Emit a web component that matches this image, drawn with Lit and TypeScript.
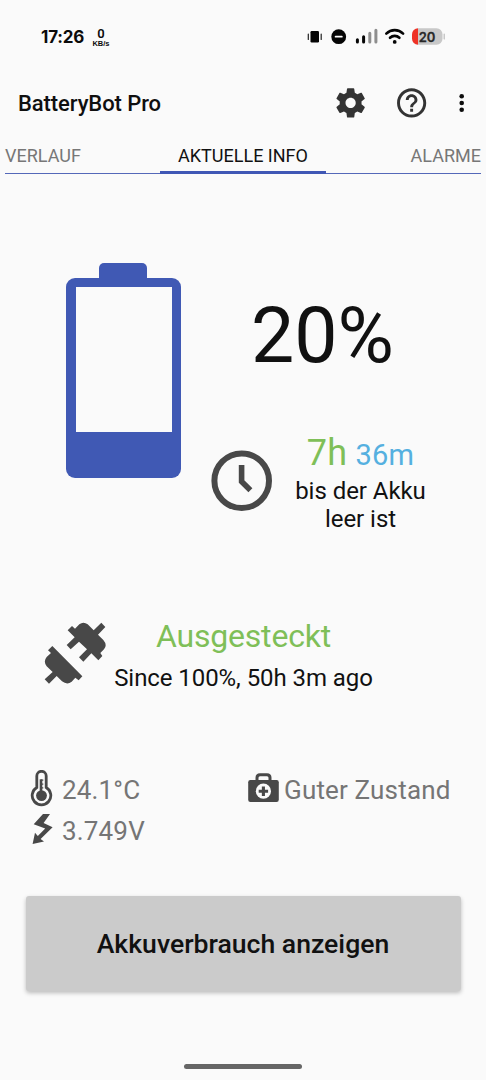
import { LitElement, html, css } from "lit";
import { customElement, property } from "lit/decorators.js";

@customElement("status-bar")
class StatusBar extends LitElement {
  static styles = css`
    :host { display: flex; height: 74px; box-sizing: border-box; padding: 0 41px 0 41px; align-items: flex-start; font-family: Inter, sans-serif; color: #0b0b0b; }
    .time { font-size: 17px; font-weight: 700; line-height: 20px; margin-top: 27px; width: 51px; letter-spacing: -0.2px; white-space: nowrap; }
    .net { display: flex; flex-direction: column; align-items: center; margin-top: 28px; width: 18px; font-weight: 700; }
    .rate { font: 600 13px/12px Roboto, sans-serif; }
    .unit { font: 700 7.5px/7px "Liberation Sans", sans-serif; }
    .icons { margin: 26px 0 0 auto; display: block; }
    .level { font: 600 13px Inter, sans-serif; letter-spacing: 0; }
  `;
  render() {
    return html`
      <div class="time">17:26</div>
      <div class="net"><span class="rate">0</span><span class="unit">KB/s</span></div>
      <svg class="icons" width="140" height="22" viewBox="305 26 140 22">
        <rect x="310.5" y="31" width="8.5" height="11.5" rx="1.2" fill="#050505" />
        <path d="M308.3 34v5.5M321.2 34v5.5" stroke="#222" stroke-width="1.2" stroke-linecap="round" />
        <circle cx="338.7" cy="36.7" r="7.4" fill="#050505" />
        <path d="M335.6 36.7h6.2" stroke="#fff" stroke-width="1.8" stroke-linecap="round" />
        <g stroke-width="3" stroke-linecap="round">
          <path d="M357.4 39.7v2.2M363.6 36.8v5.1" stroke="#050505" />
          <path d="M369.8 33.2v8.7M375.9 30.2v11.7" stroke="#8e8e8e" />
        </g>
        <g fill="none" stroke="#050505" stroke-width="2.6" stroke-linecap="round">
          <path d="M386.3 33.6a12 12 0 0 1 16.8 0M390 37.8a6.8 6.8 0 0 1 9.4 0" />
        </g>
        <circle cx="394.7" cy="41.9" r="1.9" fill="#050505" />
        <path d="M418 28.3h18.5a6 6 0 0 1 6 6v4.4a6 6 0 0 1-6 6H418z" fill="#c8c8c8" />
        <path d="M418 28.3a6 6 0 0 0-6 6v4.4a6 6 0 0 0 6 6z" fill="#ee3226" />
        <path d="M444.3 34.4v4.4" stroke="#c8c8c8" stroke-width="1.6" stroke-linecap="round" />
        <text class="level" x="427" y="41.5" text-anchor="middle" fill="#292929" stroke="#292929" stroke-width=".3">20</text>
      </svg>
    `;
  }
}

@customElement("app-bar")
class AppBar extends LitElement {
  static styles = css`
    :host { display: flex; height: 58px; align-items: center; padding: 0 18px 0 18px; }
    h1 { flex: 1; margin: 0; padding-top: 2px; font: 500 22px/30px Roboto, sans-serif; color: #0f0f0f; letter-spacing: -0.08px; }
    svg { display: block; }
    .gear { margin-right: 26px; }
    .help { margin-right: 25px; }
  `;
  render() {
    return html`
      <h1>BatteryBot Pro</h1>
      <svg class="gear" width="35" height="35" viewBox="0.6 0.4 24 24">
        <path fill="#333" d="M19.43 12.98c.04-.32.07-.64.07-.98s-.03-.66-.07-.98l2.11-1.65c.19-.15.24-.42.12-.64l-2-3.46c-.12-.22-.39-.3-.61-.22l-2.49 1c-.52-.4-1.08-.73-1.69-.98l-.38-2.65A.488.488 0 0 0 14 2h-4c-.25 0-.46.18-.49.42l-.38 2.65c-.61.25-1.17.59-1.69.98l-2.49-1c-.23-.09-.49 0-.61.22l-2 3.46c-.13.22-.07.49.12.64l2.11 1.65c-.04.32-.07.65-.07.98s.03.66.07.98l-2.11 1.65c-.19.15-.24.42-.12.64l2 3.46c.12.22.39.3.61.22l2.49-1c.52.4 1.08.73 1.69.98l.38 2.65c.03.24.24.42.49.42h4c.25 0 .46-.18.49-.42l.38-2.65c.61-.25 1.17-.59 1.69-.98l2.49 1c.23.09.49 0 .61-.22l2-3.46c.12-.22.07-.49-.12-.64l-2.11-1.65zM12 15.5c-1.93 0-3.5-1.57-3.5-3.5s1.57-3.5 3.5-3.5 3.5 1.57 3.5 3.5-1.57 3.5-3.5 3.5z" />
      </svg>
      <svg class="help" width="35" height="35" viewBox="0.6 0.4 24 24">
        <path fill="#333" d="M11 18h2v-2h-2v2zm1-16C6.48 2 2 6.48 2 12s4.48 10 10 10 10-4.48 10-10S17.52 2 12 2zm0 18c-4.41 0-8-3.59-8-8s3.59-8 8-8 8 3.59 8 8-3.59 8-8 8zm0-14c-2.21 0-4 1.79-4 4h2c0-1.1.9-2 2-2s2 .9 2 2c0 2-3 1.75-3 5h2c0-2.25 3-2.5 3-5 0-2.21-1.79-4-4-4z" />
      </svg>
      <svg width="13" height="24" viewBox="0 0 13 24">
        <g fill="#0d0d0d"><circle cx="6.7" cy="5.2" r="2.3" /><circle cx="6.7" cy="12" r="2.3" /><circle cx="6.7" cy="18.8" r="2.3" /></g>
      </svg>
    `;
  }
}

@customElement("tab-strip")
class TabStrip extends LitElement {
  static styles = css`
    :host { display: grid; grid-template-columns: 155px 166px 155px; margin: 0 5px; height: 42px; box-sizing: border-box; font: 400 18px/24px Roboto, sans-serif; color: #777; }
    .tab { border-bottom: 1px solid #5468b9; padding-top: 12px; white-space: nowrap; }
    .active { color: #111; text-align: center; border-bottom: 3px solid #3f57b5; }
    .last { text-align: right; }
  `;
  render() {
    return html`
      <div class="tab">VERLAUF</div>
      <div class="tab active">AKTUELLE INFO</div>
      <div class="tab last">ALARME</div>
    `;
  }
}

@customElement("battery-gauge")
class BatteryGauge extends LitElement {
  @property({ type: Number }) level = 20;
  static styles = css`
    :host { display: flex; flex-direction: column; width: 115px; }
    .cap { width: 48px; height: 15px; margin-left: 33.3px; border-radius: 5px 5px 0 0; background: #4059b4; }
    .body { width: 115px; height: 200px; box-sizing: border-box; border-radius: 9px; padding: 9px 9.5px; background: #4059b4; }
    .cell { height: 181px; display: flex; flex-direction: column; }
    .empty { background: #fafafa; }
  `;
  render() {
    return html`
      <div class="cap"></div>
      <div class="body"><div class="cell"><div class="empty" style="height:${100 - this.level}%"></div></div></div>
    `;
  }
}

@customElement("app-root")
class AppRoot extends LitElement {
  static styles = css`
    :host { display: flex; flex-direction: column; height: 1080px; background: #fafafa; font-family: Roboto, sans-serif; color: #111; overflow: hidden; }
    svg { display: block; flex: none; }
    .main { display: flex; height: 354px; padding: 89px 0 0 66px; box-sizing: border-box; }
    .side { flex: 1; display: flex; flex-direction: column; padding-left: 30px; }
    .percent { font-size: 77px; line-height: 90px; margin: 28px 0 0 40px; white-space: nowrap; }
    .remaining { display: flex; margin-top: 50px; }
    .clock { margin-top: 19px; }
    .estimate { width: 175px; text-align: center; }
    .time { line-height: 44px; height: 46px; letter-spacing: 0.2px; }
    .hours { font-size: 36px; color: #7fbf58; }
    .minutes { font-size: 29px; color: #55b0e0; margin-left: 4px; }
    .caption { font-size: 24px; line-height: 28px; letter-spacing: -0.05px; }
    .plugged { display: flex; height: 240px; box-sizing: border-box; padding: 88px 0 0 43px; }
    .plug { margin-top: 5px; }
    .state { width: 273px; text-align: center; white-space: nowrap; }
    .name { font-size: 32px; line-height: 40px; color: #7fbf58; letter-spacing: -0.2px; }
    .since { font-size: 24px; line-height: 30px; margin-top: 7px; letter-spacing: -0.07px; }
    .vitals { display: grid; grid-template-columns: 218px 1fr; grid-template-rows: 41px 41px; padding-left: 30px; height: 128px; box-sizing: border-box; font-size: 26px; line-height: 41px; color: #757575; letter-spacing: 0.17px; }
    .vital { display: flex; align-items: center; white-space: nowrap; }
    .vital svg { margin-right: 8px; }
    .vital .kit { margin-right: 4px; }
    .vital span { padding-top: 3px; line-height: 38px; }
    .usage { margin: 0 25.5px; height: 95px; flex: none; border: 0; border-radius: 3px; background: #cbcbcb; box-shadow: 0 2px 4px rgba(0,0,0,.25); font: 500 26.6px/30px Roboto, sans-serif; color: #111; }
    .handle { margin: 73px auto 0; width: 118px; height: 5px; border-radius: 3px; background: #666; }
  `;
  render() {
    return html`
      <status-bar></status-bar>
      <app-bar></app-bar>
      <tab-strip></tab-strip>
      <section class="main">
        <battery-gauge .level=${20}></battery-gauge>
        <div class="side">
          <div class="percent">20%</div>
          <div class="remaining">
            <svg class="clock" width="62" height="62" viewBox="0 0 62 62" fill="none" stroke="#484848">
              <circle cx="30.7" cy="30.7" r="27.3" stroke-width="6" />
              <path d="M30.6 15v16.5l8.8 8.8" stroke-width="5.6" />
            </svg>
            <div class="estimate">
              <div class="time"><span class="hours">7h</span> <span class="minutes">36m</span></div>
              <div class="caption">bis der Akku<br />leer ist</div>
            </div>
          </div>
        </div>
      </section>
      <section class="plugged">
        <svg class="plug" width="64" height="64" viewBox="9 9 192 192" fill="#484848">
          <path d="M96 24L105 32L118 19Q130 10 143 19L161 37L184 14L196 27L174 50L190 66Q203 81 192 94L181 105L187 114L175 127L154 106L130 131L117 118L141 94L117 71L92 94L80 81L104 58L83 37Z" />
          <path d="M37 84L127 175L116 187L106 179L95 191Q82 202 66 190L50 174L27 197L14 184L38 162L20 145Q9 130 20 117L33 105L24 97Z" />
        </svg>
        <div class="state">
          <div class="name">Ausgesteckt</div>
          <div class="since">Since 100%, 50h 3m ago</div>
        </div>
      </section>
      <section class="vitals">
        <div class="vital">
          <svg width="24" height="38" viewBox="30 770 24 38">
            <path d="M36.8 787.5V776a4.7 4.7 0 0 1 9.4 0v11.5a9.3 9.3 0 1 1-9.4 0z" fill="none" stroke="#484848" stroke-width="2.8" />
            <circle cx="41.5" cy="795.6" r="5.4" fill="#484848" />
            <path d="M41 779.3v13" stroke="#484848" stroke-width="2.6" />
            <path d="M41 780.2h2.3M41 784.1h2.3M41 787.8h2.3" stroke="#484848" stroke-width="1.3" />
          </svg>
          <span>24.1°C</span>
        </div>
        <div class="vital">
          <svg class="kit" width="32" height="32" viewBox="248 773 32 32">
            <path d="M257 781v-3.3q0-3 3-3h7q3 0 3 3v3.3" fill="none" stroke="#484848" stroke-width="3" />
            <rect x="248.2" y="780" width="30.6" height="22" rx="2.2" fill="#484848" />
            <circle cx="263.4" cy="791.2" r="7.6" fill="#fafafa" />
            <path d="M263.4 786.5v9.4M258.7 791.2h9.4" stroke="#484848" stroke-width="3.1" />
          </svg>
          <span>Guter Zustand</span>
        </div>
        <div class="vital">
          <svg width="24" height="32" viewBox="30 814 24 32">
            <path d="M43 814L50 814L43.6 823L52.6 827.3L40.6 839L44 841.4L32.6 844L35 832.8L37.8 836L45.2 828.6L33.7 824.2Z" fill="#484848" />
          </svg>
          <span>3.749V</span>
        </div>
      </section>
      <button class="usage">Akkuverbrauch anzeigen</button>
      <div class="handle"></div>
    `;
  }
}
